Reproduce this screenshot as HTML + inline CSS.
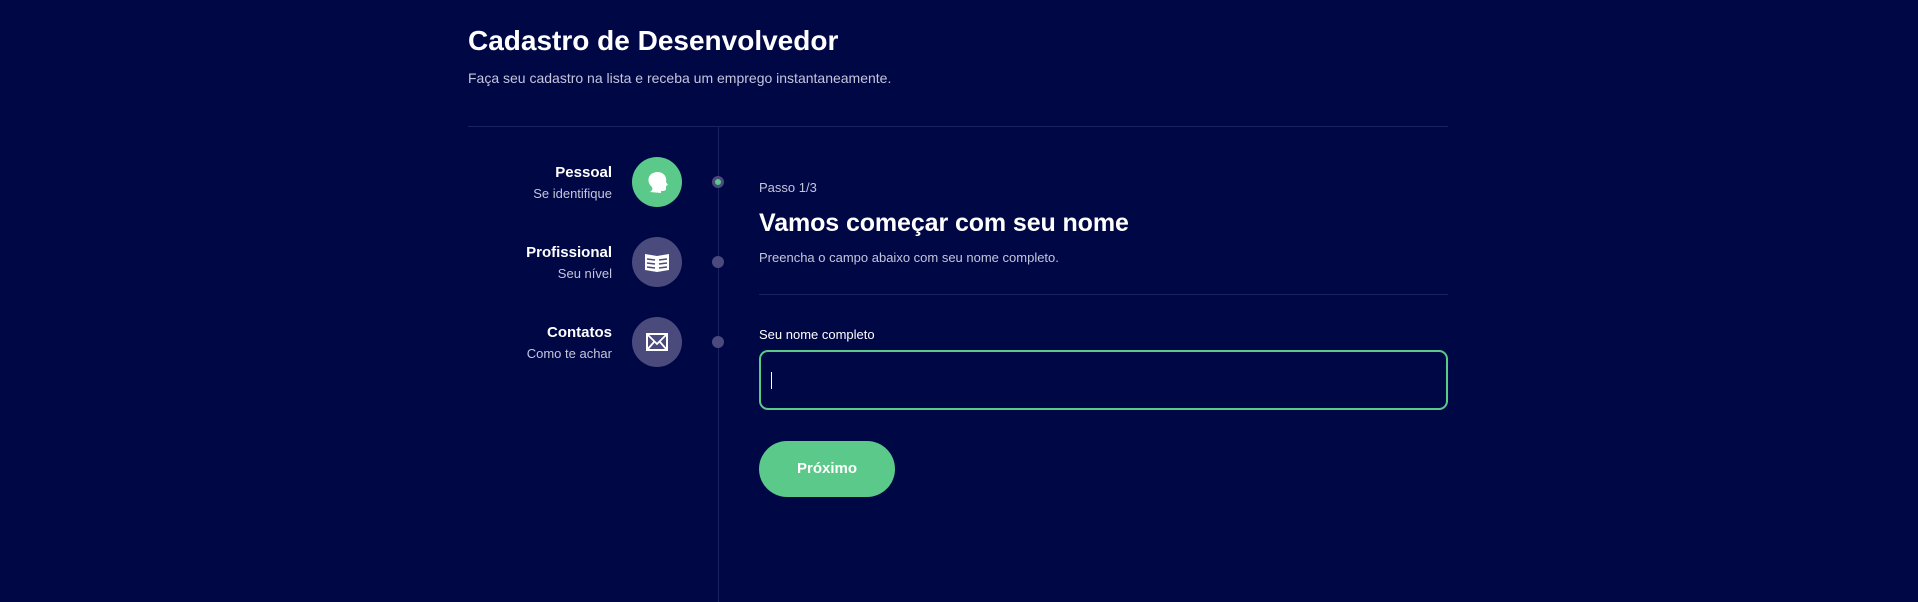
<!DOCTYPE html>
<html><head><meta charset="utf-8"><style>
*{margin:0;padding:0;box-sizing:border-box}
body{width:1918px;height:602px;background:#000745;font-family:"Liberation Sans",sans-serif;color:#fff;position:relative;overflow:hidden}
.a{position:absolute;white-space:nowrap}
.lbl{right:1306px;text-align:right}
.b{font-weight:bold;font-size:15px}
.s{font-size:13px;color:#c4c6dc}
.c{position:absolute;left:632px;width:50px;height:50px;border-radius:50%;background:#4a4b7c}
.d{position:absolute;left:712px;width:12px;height:12px;border-radius:50%;background:#4a4b7c}
</style></head><body>
<div class="a" style="left:468px;top:25px;font-size:28px;font-weight:bold">Cadastro de Desenvolvedor</div>
<div class="a" style="left:468px;top:70px;font-size:14px;color:#c4c6dc">Faça seu cadastro na lista e receba um emprego instantaneamente.</div>
<div class="a" style="left:468px;top:126px;width:980px;height:1px;background:#1c2260"></div>
<div class="a" style="left:718px;top:126px;width:1px;height:476px;background:#1c2260"></div>

<div class="a lbl b" style="top:164px">Pessoal</div>
<div class="a lbl s" style="top:186px">Se identifique</div>
<div class="a lbl b" style="top:244px">Profissional</div>
<div class="a lbl s" style="top:266px">Seu nível</div>
<div class="a lbl b" style="top:324px">Contatos</div>
<div class="a lbl s" style="top:346px">Como te achar</div>

<div class="c" style="top:157px;background:#5bc98a"><svg width="50" height="50" viewBox="0 0 50 50"><path d="M18 35 C21 33 21 31 19 29 C15 25 15 16 25 15 C32 15 35 20 34 25 L36 28 L34 29 L34 32 C34 34 31 34 29 34 L29 36 Z" fill="#fff"/></svg></div>
<div class="c" style="top:237px"><svg width="50" height="50" viewBox="0 0 50 50"><path d="M13 17 L25 19 L37 17 L37 33 L25 35 L13 33 Z" fill="#fff"/><g stroke="#4a4b7c" stroke-width="1.6"><path d="M15 22 L23 23 M15 26 L23 27 M15 30 L23 31 M27 23 L35 22 M27 27 L35 26 M27 31 L35 30"/></g></svg></div>
<div class="c" style="top:317px"><svg width="50" height="50" viewBox="0 0 50 50"><rect x="15" y="17" width="20" height="16" fill="none" stroke="#fff" stroke-width="2"/><path d="M15 17 L25 27 L35 17 M15 33 L22 25 M35 33 L28 25" fill="none" stroke="#fff" stroke-width="1.8"/></svg></div>

<div class="d" style="top:176px;border:3px solid #4a4b7c;background:#5bc98a"></div>
<div class="d" style="top:256px"></div>
<div class="d" style="top:336px"></div>

<div class="a s" style="left:759px;top:180px">Passo 1/3</div>
<div class="a" style="left:759px;top:209px;font-size:25px;font-weight:bold;letter-spacing:-0.1px">Vamos começar com seu nome</div>
<div class="a s" style="left:759px;top:250px">Preencha o campo abaixo com seu nome completo.</div>
<div class="a" style="left:759px;top:294px;width:689px;height:1px;background:#1c2260"></div>
<div class="a" style="left:759px;top:327px;font-size:13px">Seu nome completo</div>
<div class="a" style="left:759px;top:350px;width:689px;height:60px;border:2px solid #5bc98a;border-radius:9px"></div>
<div class="a" style="left:771px;top:372px;width:1px;height:17px;background:#fff"></div>
<div class="a" style="left:759px;top:441px;width:136px;height:56px;border-radius:28px;background:#5bc98a;font-weight:bold;font-size:15px;text-align:center;line-height:56px">Próximo</div>
</body></html>
